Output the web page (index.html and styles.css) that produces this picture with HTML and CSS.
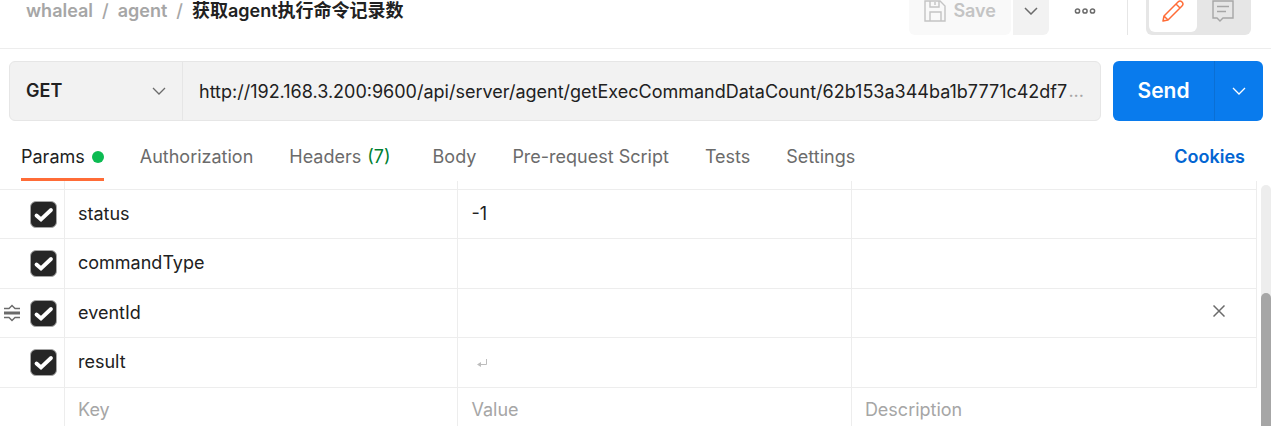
FILE: index.html
```html
<!DOCTYPE html>
<html lang="zh-CN">
<head>
<meta charset="utf-8">
<meta name="viewport" content="width=device-width, initial-scale=1">
<title>获取agent执行命令记录数</title>
<link rel="stylesheet" href="styles.css">
</head>
<body>
<div class="app">
  <header class="topbar">
    <nav class="crumbs" aria-label="Breadcrumb">
      <a href="#whaleal">whaleal</a><span>/</span><a href="#agent">agent</a><span>/</span><h1 class="crumb-title">获取agent执行命令记录数</h1>
    </nav>
    <div class="tools">
      <div class="save-group">
        <button class="save" type="button" disabled>
          <svg width="22" height="22" viewBox="0 0 22 22" fill="none" stroke="currentColor" stroke-width="1.4"><path d="M1 1h15l5 5v15H1zM6 1v6h9V1M11 2v3M6 21v-9h11v9"/></svg>
          Save
        </button>
        <button class="save-more" type="button" aria-label="Save options">
          <svg width="14" height="8" viewBox="0 0 14 8" fill="none" stroke="currentColor" stroke-width="1.5"><path d="M1 1l6 6 6-6"/></svg>
        </button>
      </div>
      <button class="more" type="button" aria-label="More actions">
        <svg width="22" height="8" viewBox="0 0 22 8" fill="none" stroke="currentColor" stroke-width="1.5"><circle cx="3.5" cy="4" r="2.1"/><circle cx="11" cy="4" r="2.1"/><circle cx="18.5" cy="4" r="2.1"/></svg>
      </button>
      <div class="modes">
        <button class="mode mode-on" type="button" aria-label="Edit">
          <svg width="24" height="24" viewBox="0 0 24 24" fill="none" stroke="currentColor" stroke-width="1.5" stroke-linejoin="round"><path d="M2 22l1-5L17 3q2-2 4 0t0 4L7 21zM15 5l4 4M3 17l4 4"/></svg>
        </button>
        <button class="mode" type="button" aria-label="Comments">
          <svg width="22" height="22" viewBox="0 0 22 22" fill="none" stroke="currentColor" stroke-width="1.4"><path d="M1 1h20v17H11l-3 3-3-3H1zM5 6.500h12M5 11.500h9"/></svg>
        </button>
      </div>
    </div>
  </header>

  <form class="request">
    <div class="address">
      <div class="method">
        <select class="method-select" aria-label="Method"><option>GET</option><option>POST</option></select>
        <svg class="method-arrow" width="14" height="8" viewBox="0 0 14 8" fill="none" stroke="currentColor" stroke-width="1.3"><path d="M1 1l6 6 6-6"/></svg>
      </div>
      <input class="url" type="text" aria-label="Request URL" value="http://192.168.3.200:9600/api/server/agent/getExecCommandDataCount/62b153a344ba1b7771c42df7">
      <span class="dots">...</span>
    </div>
    <div class="send-group">
      <button class="send" type="button">Send</button>
      <button class="send-more" type="button" aria-label="Send options">
        <svg width="14" height="8" viewBox="0 0 14 8" fill="none" stroke="currentColor" stroke-width="1.3"><path d="M1 1l6 6 6-6"/></svg>
      </button>
    </div>
  </form>

  <nav class="tabs" aria-label="Request sections">
    <a class="tab tab-on" href="#params">Params<span class="dot"></span></a>
    <a class="tab" href="#authorization">Authorization</a>
    <a class="tab" href="#headers">Headers<span class="count">(7)</span></a>
    <a class="tab" href="#body">Body</a>
    <a class="tab" href="#pre-request">Pre-request Script</a>
    <a class="tab" href="#tests">Tests</a>
    <a class="tab" href="#settings">Settings</a>
    <a class="cookies" href="#cookies">Cookies</a>
  </nav>

  <main class="panel">
    <table class="params">
      <colgroup><col class="col-check"><col class="col-key"><col class="col-value"><col></colgroup>
      <tbody>
        <tr class="sliver"><td></td><td></td><td></td><td></td></tr>
        <tr>
          <td><div class="row-tools"><label class="check"><input type="checkbox" aria-label="Use status" checked><svg width="27" height="27" viewBox="0 0 27 27"><path d="M6.500 14.500l4.500 4 10-9.500"/></svg></label></div></td>
          <td><input class="cell" aria-label="Key" value="status"></td>
          <td><input class="cell" aria-label="Value" value="-1"></td>
          <td></td>
        </tr>
        <tr>
          <td><div class="row-tools"><label class="check"><input type="checkbox" aria-label="Use commandType" checked><svg width="27" height="27" viewBox="0 0 27 27"><path d="M6.500 14.500l4.500 4 10-9.500"/></svg></label></div></td>
          <td><input class="cell" aria-label="Key" value="commandType"></td>
          <td></td>
          <td></td>
        </tr>
        <tr>
          <td><div class="row-tools">
            <svg class="grip" width="16" height="18" viewBox="0 0 16 18" fill="none" stroke="currentColor"><path stroke-width="1.400" d="M0 4.500h5l3-3 3 3h5M0 13.500h5l3 3 3-3h5"/><path stroke-width="3" d="M0 9h16"/></svg>
            <label class="check"><input type="checkbox" aria-label="Use eventId" checked><svg width="27" height="27" viewBox="0 0 27 27"><path d="M6.500 14.500l4.500 4 10-9.500"/></svg></label></div></td>
          <td><input class="cell" aria-label="Key" value="eventId"></td>
          <td></td>
          <td><button class="remove" type="button" aria-label="Remove eventId"><svg width="12" height="12" viewBox="0 0 12 12" fill="none" stroke="currentColor" stroke-width="1.500"><path d="M.5.5l11 11M11.500.5l-11 11"/></svg></button></td>
        </tr>
        <tr>
          <td><div class="row-tools"><label class="check"><input type="checkbox" aria-label="Use result" checked><svg width="27" height="27" viewBox="0 0 27 27"><path d="M6.500 14.500l4.500 4 10-9.500"/></svg></label></div></td>
          <td><input class="cell" aria-label="Key" value="result"></td>
          <td><svg class="newline" width="11" height="8" viewBox="0 0 11 8" fill="none" stroke="currentColor"><path d="M9.500 0v5.500H2"/><path fill="currentColor" stroke="none" d="M0 5.500L4 3v5z"/></svg></td>
          <td></td>
        </tr>
        <tr class="blank">
          <td></td>
          <td><input class="cell" aria-label="New key" placeholder="Key"></td>
          <td><input class="cell" aria-label="New value" placeholder="Value"></td>
          <td><input class="cell" aria-label="New description" placeholder="Description"></td>
        </tr>
      </tbody>
    </table>
    <div class="scroll"><div class="thumb"></div></div>
  </main>
</div>
</body>
</html>
```

FILE: styles.css
```css
* { box-sizing: border-box; }

body {
  margin: 0;
  background: #fff;
  color: #212121;
  font: 400 18px/24px Inter, "Noto Sans CJK SC", sans-serif;
}

button, input, select {
  margin: 0;
  padding: 0;
  border: 0;
  background: none;
  color: inherit;
  font: inherit;
}

a { color: inherit; text-decoration: none; }
svg { display: block; flex: none; }

.app {
  display: flex;
  flex-direction: column;
  height: 100vh;
  overflow: hidden;
}

/* top bar */
.topbar {
  display: flex;
  flex: none;
  align-items: flex-end;
  justify-content: space-between;
  height: 49px;
  padding: 0 20px 13px 26px;
  border-bottom: 1px solid #ededed;
  overflow: hidden;
}

.crumbs {
  display: flex;
  align-items: center;
  gap: 9px;
  height: 48px;
  color: #a6a6a6;
  font-weight: 600;
}

.crumbs span { font-weight: 500; }

.crumb-title {
  margin: 0;
  color: #212121;
  font-size: 18px;
  font-weight: 600;
}

.tools { display: flex; align-items: center; height: 48px; }
.save-group { display: flex; gap: 2px; height: 48px; }

.save {
  display: flex;
  align-items: center;
  gap: 7px;
  padding: 0 15px;
  border-radius: 6px;
  background: #f9f9f9;
  color: #c4c4c4;
  font-weight: 600;
}

.save-more {
  display: grid;
  place-items: center;
  width: 36px;
  border-radius: 0 6px 6px 0;
  background: #f2f2f2;
  color: #6b6b6b;
}

.more {
  display: grid;
  place-items: center;
  width: 79px;
  height: 48px;
  padding-right: 7px;
  border-right: 1px solid #e6e6e6;
  color: #6b6b6b;
}

.modes {
  display: flex;
  height: 48px;
  margin-left: 18px;
  padding: 3px;
  border-radius: 6px;
  background: #e6e6e6;
}

.mode {
  display: grid;
  place-items: center;
  width: 51px;
  border-radius: 6px;
  color: #a6a6a6;
}

.mode-on { width: 48px; background: #fff; color: #ff6c37; }

/* request line */
.request {
  display: flex;
  flex: none;
  gap: 12px;
  padding: 12px 8px 12px 9px;
}

.address {
  display: flex;
  flex: 1;
  align-items: center;
  min-width: 0;
  height: 60px;
  padding-right: 16px;
  border: 1px solid #e6e6e6;
  border-radius: 6px;
  background: #f2f2f2;
}

.method {
  display: grid;
  align-items: center;
  width: 173px;
  height: 58px;
  border-right: 1px solid #e6e6e6;
}

.method-select, .method-arrow { grid-area: 1 / 1; }

.method-select {
  width: 100%;
  height: 58px;
  padding-left: 16px;
  appearance: none;
  font-weight: 600;
}

.method-arrow {
  justify-self: end;
  margin-right: 16px;
  color: #6b6b6b;
  pointer-events: none;
}

.url { flex: 1; min-width: 0; height: 58px; margin-left: 16px; }
.dots { color: #a6a6a6; }

.send-group {
  display: flex;
  width: 150px;
  border-radius: 6px;
  background: #097bed;
  color: #fff;
}

.send {
  flex: 1;
  border-right: 1px solid #0a6fd4;
  font-size: 21px;
  font-weight: 600;
}

.send-more { display: grid; place-items: center; width: 48px; }

/* section tabs */
.tabs {
  display: flex;
  flex: none;
  gap: 36px;
  height: 48px;
  padding: 0 26px 0 21px;
  color: #6b6b6b;
}

.tab, .cookies {
  display: flex;
  align-items: center;
  padding-top: 2px;
  border-bottom: 3px solid transparent;
}

.tab-on { gap: 7px; border-color: #ff6c37; color: #212121; }
.dot { width: 12px; height: 12px; border-radius: 50%; background: #0cbb52; }
.count { margin: 0 6px; color: #007f31; }
.cookies { margin-left: auto; color: #0265d2; font-weight: 600; }

/* parameter table */
.panel { display: flex; flex: 1; gap: 4px; min-height: 0; }

.params {
  flex: 1;
  height: max-content;
  border-collapse: separate;
  border-spacing: 0;
  table-layout: fixed;
}

.col-check { width: 65px; }
.col-key, .col-value { width: 31.3%; }

.params td {
  height: 50px;
  padding: 0;
  border: solid #ededed;
  border-width: 0 1px 1px 0;
}

.params tr:nth-child(even) td { height: 49px; }
.params .sliver td { height: 9px; }
.params .blank td:last-child { border-right: 0; }
.params .blank td { height: 44px; border-bottom: 0; vertical-align: top; }

.row-tools {
  display: flex;
  align-items: center;
  justify-content: flex-end;
  gap: 10px;
  padding-right: 7px;
}

.grip { color: #6b6b6b; }
.check { display: grid; }
.check input, .check svg { grid-area: 1 / 1; }

.check input {
  width: 27px;
  height: 27px;
  border: 1px solid #a6a6a6;
  border-radius: 6px;
  appearance: none;
}

.check input:checked { background: #262626; }
.check svg { fill: none; stroke: #fff; stroke-width: 3.8; pointer-events: none; stroke-linecap: round; }
.check input:not(:checked) + svg { visibility: hidden; }

.cell {
  display: block;
  width: 100%;
  height: 44px;
  padding: 0 13px 2px;
}

.cell::placeholder { color: #a6a6a6; opacity: 1; }

.newline { margin-left: 19px; color: #bdbdbd; }

.remove {
  display: grid;
  place-items: center;
  width: 24px;
  height: 24px;
  margin: 0 25px 4px auto;
  color: #6b6b6b;
}

.scroll {
  width: 10px;
  margin-top: 4px;
  padding-top: 108px;
  border-radius: 5px 5px 0 0;
  background: #ededed;
}

.thumb { height: 100%; border-radius: 5px 5px 0 0; background: #a6a6a6; }
```
